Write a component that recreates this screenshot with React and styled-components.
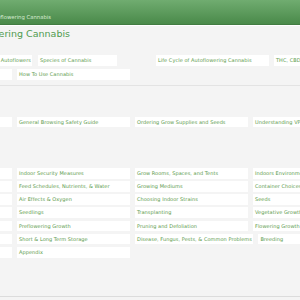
import React from 'react';
import styled, { createGlobalStyle } from 'styled-components';

const Global = createGlobalStyle`
  html, body {
    margin: 0;
    padding: 0;
    background: #f4f4f4;
    overflow: hidden;
  }
  body {
    font-family: "DejaVu Sans", Verdana, sans-serif;
  }
`;

const Header = styled.header`
  height: 24px;
  background: linear-gradient(#70ac70, #4a8a4a);
  border-bottom: 1px solid #427c42;
  box-shadow: 0 1px 0 #ffffff;
  display: flex;
  align-items: flex-end;
`;

const HeaderText = styled.div`
  font-size: 5.3px;
  line-height: 6px;
  color: #d8ecd2;
  margin-left: -12px;
  padding-bottom: 4px;
  white-space: nowrap;
`;

const Main = styled.main`
  margin-left: -101px;
  width: 620px;
`;

const Title = styled.h1`
  margin: 3px 0 0 0;
  padding-left: 58px;
  font-size: 9.5px;
  line-height: 11px;
  font-weight: normal;
  color: #4f9b4f;
  white-space: nowrap;
`;

const TopRow = styled.div`
  display: grid;
  grid-template-columns: 133px 85px 152px 1fr;
  margin-top: ${p => p.$mt}px;
`;

const Row = styled.div`
  display: flex;
  gap: 5.5px;
  margin-top: ${p => p.$mt}px;
`;

const Tile = styled.a`
  display: block;
  box-sizing: border-box;
  height: 10.7px;
  line-height: 10.7px;
  background: #ffffff;
  padding: 0 1px 0 2px;
  font-size: 5px;
  letter-spacing: 0.05px;
  color: #5a9a4a;
  white-space: nowrap;
  text-decoration: none;
  overflow: hidden;
  min-width: ${p => (p.$auto ? 0 : '112.5px')};
  margin-left: ${p => p.$ml || 0}px;
  justify-self: ${p => (p.$end ? 'end' : 'stretch')};
`;

const Rule = styled.hr`
  border: none;
  border-top: 1px solid #e3e3e3;
  margin: 5px 0 0 0;
`;

const Heading = styled.h2`
  margin: ${p => p.$mt}px 0 0 0;
  padding-left: ${p => p.$pl}px;
  font-size: 5px;
  line-height: 7px;
  font-weight: normal;
  color: #6fa3c8;
  white-space: nowrap;
`;

const Footer = styled.div`
  margin-top: 38px;
  border-top: 1px solid #dcdcdc;
  height: 4px;
`;

const top = [
  'An Introduction to Growing Autoflowers',
  'Species of Cannabis',
  'Life Cycle of Autoflowering Cannabis',
  'THC, CBD, and Terpenes',
];

const indoor = [
  ['Outdoor Security', 'Indoor Security Measures', 'Grow Rooms, Spaces, and Tents', 'Indoors Environment Control'],
  ['Lighting', 'Feed Schedules, Nutrients, & Water', 'Growing Mediums', 'Container Choices'],
  ['Watering', 'Air Effects & Oxygen', 'Choosing Indoor Strains', 'Seeds'],
  ['Germination', 'Seedlings', 'Transplanting', 'Vegetative Growth'],
  ['Training', 'Preflowering Growth', 'Pruning and Defoliation', 'Flowering Growth'],
  ['Harvesting', 'Short & Long Term Storage', 'Disease, Fungus, Pests, & Common Problems', 'Breeding'],
  ['Curing', 'Appendix'],
];

export default function App() {
  return (
    <>
      <Global />
      <Header>
        <HeaderText>Autoflowering Cannabis</HeaderText>
      </Header>
      <Main>
        <Title>Autoflowering Cannabis</Title>
        <TopRow $mt={16}>
          <Tile $auto $end>{top[0]}</Tile>
          <Tile $auto $ml={6}>{top[1]}</Tile>
          <Tile $auto $ml={39}>{top[2]}</Tile>
          <Tile $auto $ml={5}>{top[3]}</Tile>
        </TopRow>
        <Row $mt={3.3}>
          <Tile>What Is Cannabis</Tile>
          <Tile>How To Use Cannabis</Tile>
        </Row>
        <Rule />
        <Heading $mt={7} $pl={54}>Privacy &amp; Security</Heading>
        <Row $mt={17}>
          <Tile>Privacy Basics</Tile>
          <Tile>General Browsing Safety Guide</Tile>
          <Tile>Ordering Grow Supplies and Seeds</Tile>
          <Tile>Understanding VPNs</Tile>
        </Row>
        <Heading $mt={15} $pl={20}>Indoor Growing</Heading>
        {indoor.map((row, i) => (
          <Row key={i} $mt={i === 0 ? 18.5 : 2.5}>
            {row.map(t => (
              <Tile key={t}>{t}</Tile>
            ))}
          </Row>
        ))}
        <Footer />
      </Main>
    </>
  );
}
